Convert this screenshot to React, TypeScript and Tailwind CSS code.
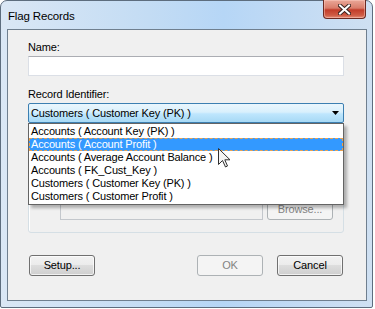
import React from "react";

const records = [
  "Accounts ( Account Key (PK) )",
  "Accounts ( Account Profit )",
  "Accounts ( Average Account Balance )",
  "Accounts ( FK_Cust_Key )",
  "Customers ( Customer Key (PK) )",
  "Customers ( Customer Profit )",
];

const btnBase =
  "h-[21px] w-[66px] rounded-[3px] border text-[11px] leading-none flex items-center justify-center";
const btnOn =
  "border-[#707070] bg-[linear-gradient(#f2f2f2_0%,#ebebeb_50%,#dddddd_50%,#cfcfcf_100%)] text-black shadow-[inset_0_0_0_1px_rgba(255,255,255,0.7)]";
const btnOff = "border-[#adb2b5] bg-[#f4f4f4] text-[#838383]";

const App = () => {
  return (
    <div className="w-[375px] h-[309px] bg-white font-['Liberation_Sans',Arial,sans-serif] tracking-[-0.15px]">
      <div className="w-[373px] h-[308px] rounded-t-[7px] rounded-b-[2px] border border-[#5d6d7e] bg-[linear-gradient(90deg,#dae7f5_0%,#c3dcf4_40%,#b6d6f6_60%,#cfe0f2_100%)] flex flex-col">
        {/* title bar */}
        <div className="h-[28px] flex items-start justify-between">
          <span className="pl-[7px] pt-[8px] text-[11.5px] leading-[14px] text-black">
            Flag Records
          </span>
          <button
            type="button"
            aria-label="Close"
            className="-mt-[1px] mr-[6px] w-[43px] h-[19px] rounded-b-[4px] border border-t-0 border-[#6b2a22] bg-[linear-gradient(#eaa898_0%,#d97d6b_45%,#c23d2a_55%,#cf5c45_85%,#e48f7a_100%)] shadow-[inset_0_0_0_1px_rgba(255,210,200,0.45)] flex items-center justify-center"
          >
            <svg width="13" height="11" viewBox="0 0 13 11">
              <path d="M2 1.5 L11 9.5 M11 1.5 L2 9.5" stroke="#3a2420" strokeWidth="4" strokeLinecap="square" />
              <path d="M2 1.5 L11 9.5 M11 1.5 L2 9.5" stroke="#ffffff" strokeWidth="2" strokeLinecap="square" />
            </svg>
          </button>
        </div>

        {/* client area */}
        <div className="ml-[6px] mr-[5px] h-[272px] border border-[#6f7f8f] bg-[#f0f0f0] pl-[20px] pr-[22px] pt-[10px] flex flex-col text-[11px] text-black">
          <label className="leading-[15px] mb-[1px]">Name:</label>
          <div className="h-[20px] border border-[#dbdfe6] border-t-[#abadb3] bg-white" />

          <label className="mt-[11px] leading-[15px] mb-[1px]">Record Identifier:</label>
          <div className="relative">
            <div className="h-[20px] border border-[#3c7fb1] rounded-[2px] bg-[linear-gradient(#eaf6fd_0%,#d9f0fc_45%,#bee6fd_55%,#a7d9f5_100%)] flex items-center justify-between pl-[2px] pr-[4px]">
              <span className="leading-[13px]">Customers ( Customer Key (PK) )</span>
              <svg width="7" height="4" viewBox="0 0 7 4">
                <path d="M0 0 H7 L3.5 4 Z" fill="#000" />
              </svg>
            </div>

            {/* dropped list */}
            <div className="absolute left-0 top-full z-10 w-full border border-[#646464] bg-white pt-[1px] pb-[1px] shadow-[3px_3px_3px_rgba(0,0,0,0.28)]">
              {records.map((r, i) => (
                <div
                  key={r}
                  className={
                    i === 1
                      ? "h-[13px] leading-[13px] pl-[2px] bg-[#3399ff] text-white outline outline-1 outline-dashed outline-[#e8a050] -outline-offset-1"
                      : "h-[13px] leading-[13px] pl-[2px]"
                  }
                >
                  {r}
                </div>
              ))}
              <svg
                className="absolute left-[189px] top-[24px]"
                width="13"
                height="20"
                viewBox="0 0 13 20"
              >
                <path
                  d="M0.5 0.5 L0.5 16.5 L4.5 12.5 L7.5 19 L9.5 18 L6.8 11.8 L12 11.8 Z"
                  fill="#f4f4f4"
                  stroke="#303030"
                  strokeWidth="1"
                  strokeLinejoin="miter"
                />
              </svg>
            </div>
          </div>

          {/* group box, mostly under the list */}
          <div className="mt-[10px] h-[100px] rounded-[3px] border border-[#d5dfe5] shadow-[inset_1px_1px_0_#ffffff] flex items-end pl-[31px] pr-[10px] pb-[12px]">
            <div className="flex gap-[4px] w-full">
              <div className="h-[21px] w-[203px] border border-[#c3c7cc] bg-[#f0f0f0]" />
              <div className={`${btnBase} ${btnOff}`}>Browse...</div>
            </div>
          </div>

          {/* buttons */}
          <div className="mt-[22px] flex items-center px-[1px]">
            <button type="button" className={`${btnBase} ${btnOn}`}>
              Setup...
            </button>
            <div className="ml-auto flex gap-[14px]">
              <button type="button" disabled className={`${btnBase} ${btnOff}`}>
                OK
              </button>
              <button
                type="button"
                className={`${btnBase} ${btnOn} border-[#3c3c3c]`}
              >
                Cancel
              </button>
            </div>
          </div>
        </div>
      </div>
    </div>
  );
};

export default App;
